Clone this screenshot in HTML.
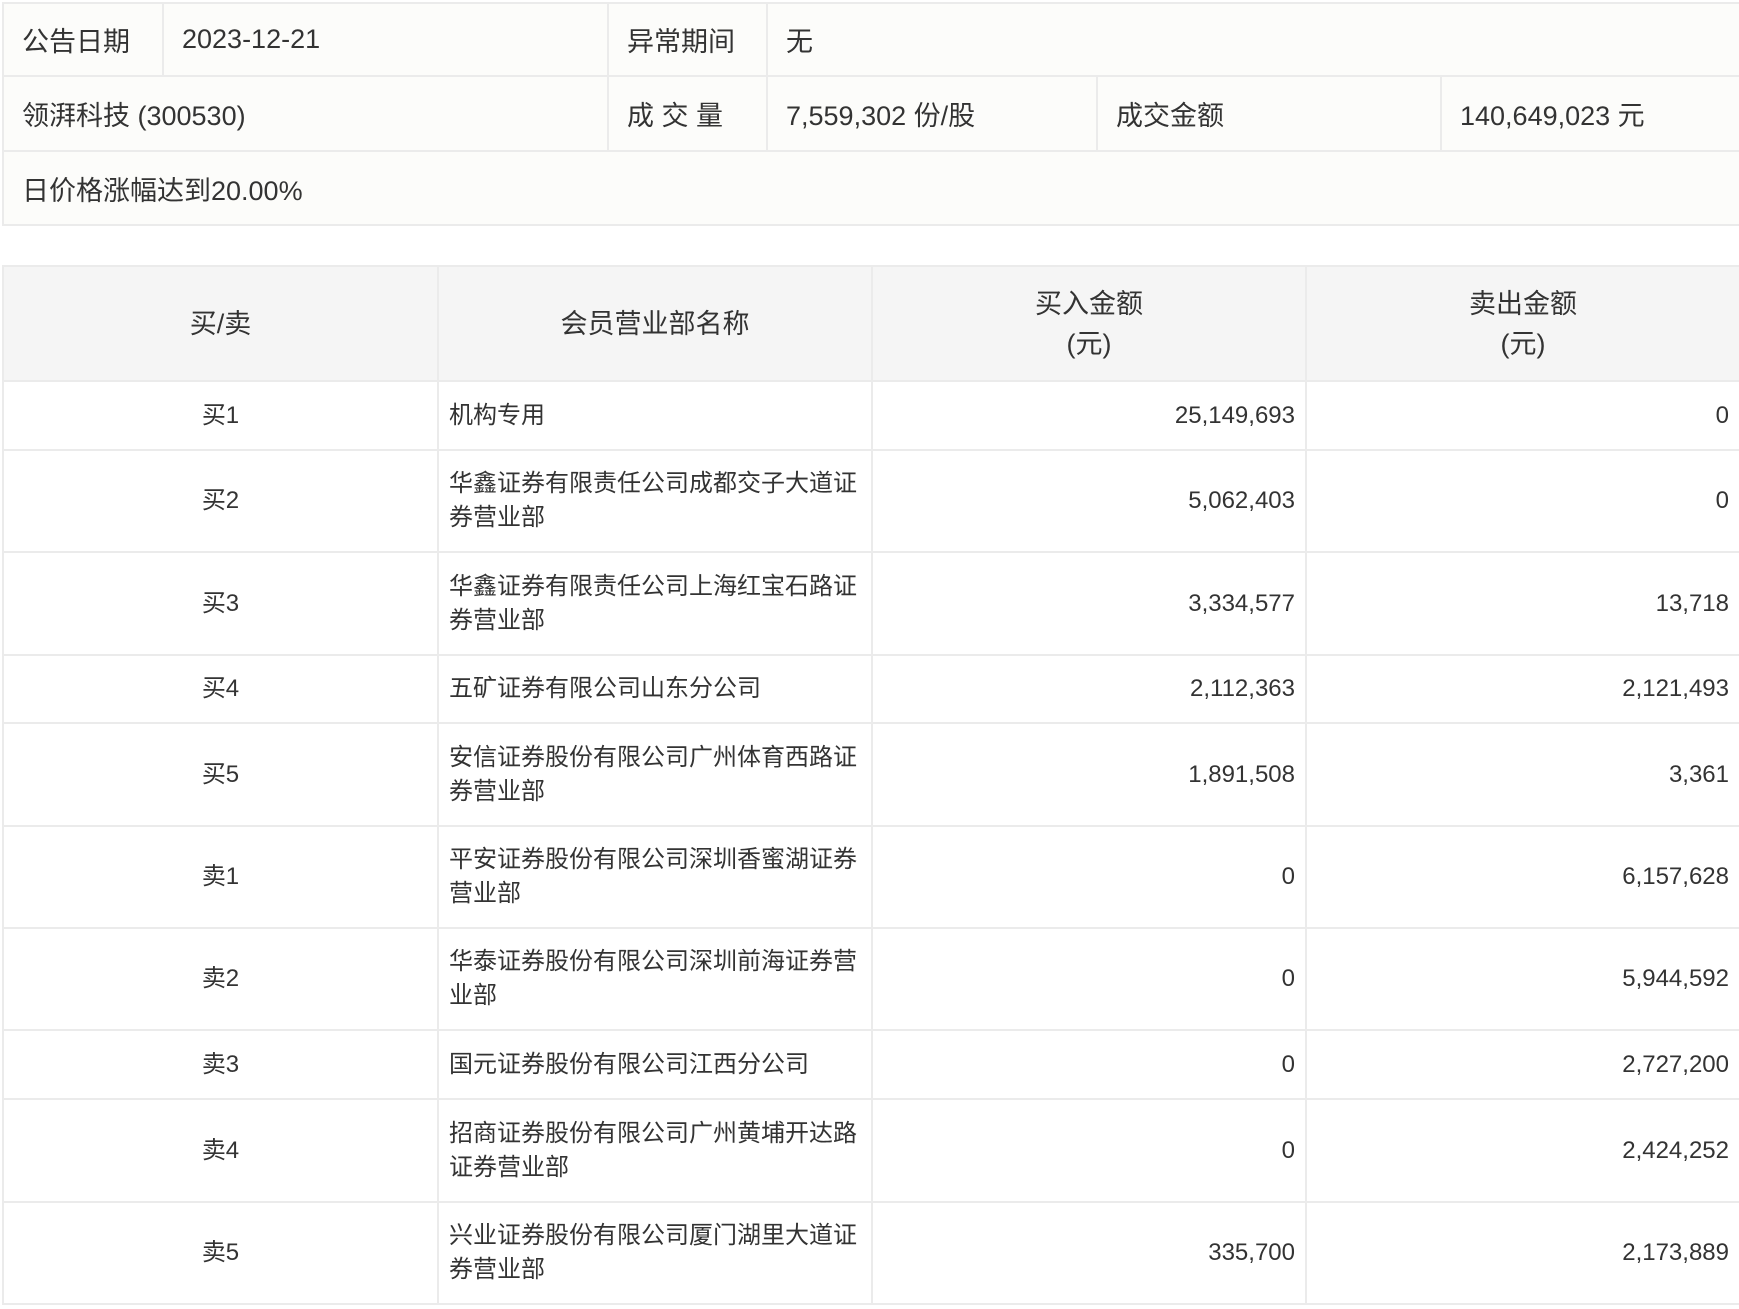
<!DOCTYPE html>
<html><head><meta charset="utf-8"><style>
body{margin:0;background:#fff;width:1739px;height:1309px;overflow:hidden;font-family:"Liberation Sans","Noto Sans CJK SC",sans-serif;color:#333}
table{border-collapse:collapse;table-layout:fixed;position:absolute;left:2px}
td,th{border:2px solid #ebebeb;padding:0;font-weight:normal}
#t1{top:2px;width:1739px;background:#fcfcfa;font-size:27px}
#t1 td{padding-left:18px}
#t2{top:265px;width:1739px;font-size:24px}
#t2 th{background:#f5f5f5;font-size:27px;line-height:40px}
#t2 td{line-height:34px}
.c{text-align:center}.r{text-align:right;padding-right:10px!important}.l{padding-left:10px!important}
</style></head><body>
<table id="t1">
<colgroup><col style="width:160px"><col style="width:445px"><col style="width:159px"><col style="width:330px"><col style="width:344px"><col></colgroup>
<tr style="height:73px"><td>公告日期</td><td>2023-12-21</td><td>异常期间</td><td colspan="3">无</td></tr>
<tr style="height:75px"><td colspan="2">领湃科技 (300530)</td><td>成 交 量</td><td>7,559,302 份/股</td><td>成交金额</td><td>140,649,023 元</td></tr>
<tr style="height:74px"><td colspan="6">日价格涨幅达到20.00%</td></tr>
</table>
<table id="t2">
<colgroup><col style="width:435px"><col style="width:434px"><col style="width:434px"><col></colgroup>
<tr style="height:115px"><th>买/卖</th><th>会员营业部名称</th><th>买入金额<br>(元)</th><th>卖出金额<br>(元)</th></tr>
<tr style="height:69px"><td class="c">买1</td><td class="l">机构专用</td><td class="r">25,149,693</td><td class="r">0</td></tr>
<tr style="height:102px"><td class="c">买2</td><td class="l">华鑫证券有限责任公司成都交子大道证券营业部</td><td class="r">5,062,403</td><td class="r">0</td></tr>
<tr style="height:103px"><td class="c">买3</td><td class="l">华鑫证券有限责任公司上海红宝石路证券营业部</td><td class="r">3,334,577</td><td class="r">13,718</td></tr>
<tr style="height:68px"><td class="c">买4</td><td class="l">五矿证券有限公司山东分公司</td><td class="r">2,112,363</td><td class="r">2,121,493</td></tr>
<tr style="height:103px"><td class="c">买5</td><td class="l">安信证券股份有限公司广州体育西路证券营业部</td><td class="r">1,891,508</td><td class="r">3,361</td></tr>
<tr style="height:102px"><td class="c">卖1</td><td class="l">平安证券股份有限公司深圳香蜜湖证券营业部</td><td class="r">0</td><td class="r">6,157,628</td></tr>
<tr style="height:102px"><td class="c">卖2</td><td class="l">华泰证券股份有限公司深圳前海证券营业部</td><td class="r">0</td><td class="r">5,944,592</td></tr>
<tr style="height:69px"><td class="c">卖3</td><td class="l">国元证券股份有限公司江西分公司</td><td class="r">0</td><td class="r">2,727,200</td></tr>
<tr style="height:103px"><td class="c">卖4</td><td class="l">招商证券股份有限公司广州黄埔开达路证券营业部</td><td class="r">0</td><td class="r">2,424,252</td></tr>
<tr style="height:102px"><td class="c">卖5</td><td class="l">兴业证券股份有限公司厦门湖里大道证券营业部</td><td class="r">335,700</td><td class="r">2,173,889</td></tr>
</table>
</body></html>
